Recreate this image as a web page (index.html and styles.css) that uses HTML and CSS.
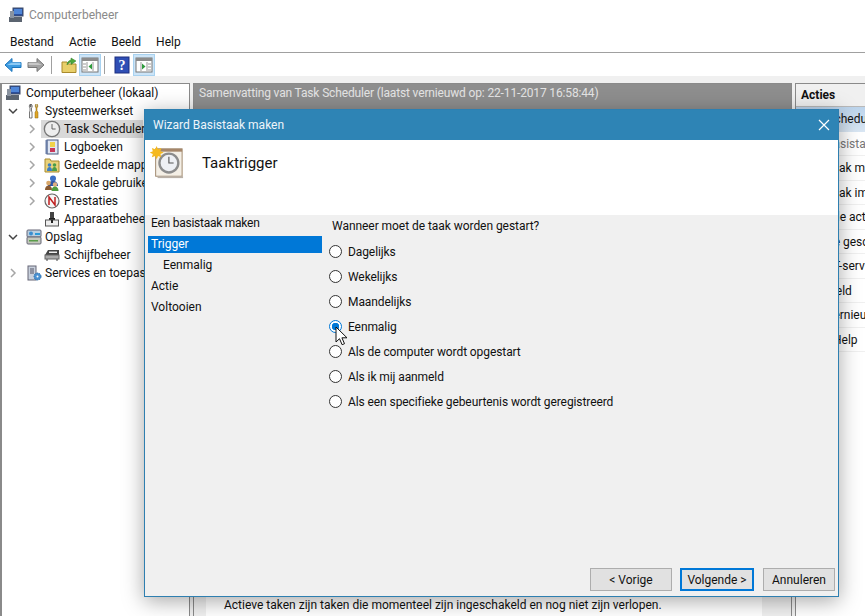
FILE: index.html
```html
<!DOCTYPE html>
<html lang="nl">
<head>
<meta charset="utf-8">
<title>Computerbeheer</title>
<link rel="stylesheet" href="styles.css">
</head>
<body>
<div class="app">
  <header class="titlebar">
    <svg class="ic16" viewBox="0 0 16 16"><rect x="5" y="1" width="10" height="8" fill="#2b4f9e" stroke="#3c4a66"/><rect x="6" y="2" width="8" height="5" fill="#4f86d8"/><rect x="1" y="10" width="13" height="5" fill="#5b6470"/><rect x="2" y="4" width="4" height="7" fill="#8a93a0"/></svg>
    <span>Computerbeheer</span>
  </header>
  <nav class="menubar"><span>Bestand</span><span>Actie</span><span>Beeld</span><span>Help</span></nav>
  <div class="toolbar">
    <svg class="tb t-back" viewBox="0 0 18 18"><path d="M1 9l7-6.500v4h9v5H8v4z" fill="#3d9be0" stroke="#1b75bc"/><path d="M8 6.500h8.500V9H3z" fill="#8ccaf5"/></svg>
    <svg class="tb t-fwd" viewBox="0 0 18 18"><path d="M17 9l-7-6.500v4H1v5h9v4z" fill="#a3a3a3" stroke="#777"/><path d="M10 6.500H1.500V9H15z" fill="#c8c8c8"/></svg>
    <i class="sep"></i>
    <svg class="tb t-up" viewBox="0 0 18 18"><path d="M2 6h5l1 2h8v8.500H2z" fill="#e8cf6a" stroke="#a98a2c"/><path d="M7 9c0-3 2-4.500 4-5V2l5 3-5 3.500V6c-2 .5-3 1.500-4 3z" fill="#4ca83c" stroke="#2f7f28" stroke-width=".5"/></svg>
    <span class="tb-on"><svg class="tb" viewBox="0 0 18 18"><rect x="1" y="2" width="16" height="14" fill="#fff" stroke="#777"/><rect x="1" y="2" width="16" height="3" fill="#8c8c8c"/><path d="M6 6v9M12 6v9M2 8h3M2 11h3M2 14h3" stroke="#999"/><path d="M11 7.500v6l-3.500-3z" fill="#2f9c3d"/></svg></span>
    <i class="sep"></i>
    <svg class="tb t-help" viewBox="0 0 18 18"><rect x="2" y="1" width="14" height="16" fill="#2f4fb5" stroke="#1d2f80"/><text x="9" y="14" class="q">?</text></svg>
    <span class="tb-on t-on2"><svg class="tb" viewBox="0 0 18 18"><rect x="1" y="2" width="16" height="14" fill="#fff" stroke="#777"/><rect x="1" y="2" width="16" height="3" fill="#8c8c8c"/><path d="M6 6v9M12 6v9M13 8h3M13 11h3M13 14h3" stroke="#999"/><path d="M7 7.500v6l3.500-3z" fill="#2f9c3d"/></svg></span>
  </div>

  <main class="panes">
    <aside class="tree">
      <div class="node l0"><svg class="ic16" viewBox="0 0 16 16"><rect x="5" y="1" width="10" height="8" fill="#2b4f9e" stroke="#3c4a66"/><rect x="6" y="2" width="8" height="5" fill="#4f86d8"/><rect x="1" y="10" width="13" height="5" fill="#5b6470"/><rect x="2" y="4" width="4" height="7" fill="#8a93a0"/></svg><span>Computerbeheer (lokaal)</span></div>
      <div class="node l1"><svg class="tw" viewBox="0 0 10 10"><path d="M1 3l4 4 4-4" class="chev-d"/></svg><svg class="ic16" viewBox="0 0 16 16"><path d="M4.500 1C3 2 3 4 4 5v3l-.5 1v6h2.500V9L5.500 8V5c1-1 1-3-.5-4v3h-.5z" fill="#fff" stroke="#555" stroke-width=".8"/><path d="M10 1c-1 1-1 3 0 4v3l-1 1v6h3V9l-1-1V5c1-1 1-3 0-4v3h-1z" fill="#e0a526" stroke="#8a6a14" stroke-width=".5"/></svg><span>Systeemwerkset</span></div>
      <div class="node l2"><svg class="tw" viewBox="0 0 10 10"><path d="M3 1l4 4-4 4" class="chev"/></svg><span class="selbox"><svg class="ic18" viewBox="0 0 20 20"><circle cx="10" cy="10" r="8.500" fill="#eee" stroke="#777" stroke-width="1.500"/><path d="M10 4.500V10h4" fill="none" stroke="#555"/></svg><span>Task Scheduler</span></span></div>
      <div class="node l2"><svg class="tw" viewBox="0 0 10 10"><path d="M3 1l4 4-4 4" class="chev"/></svg><svg class="ic16" viewBox="0 0 16 16"><rect x="3" y="1" width="11" height="14" fill="#dfe6f2" stroke="#4a5a80"/><rect x="1.500" y="1" width="2" height="14" fill="#6a7ea8"/><rect x="6" y="3" width="5" height="5" fill="#f0d24a"/><rect x="6" y="9" width="5" height="4" fill="#c8385a"/></svg><span>Logboeken</span></div>
      <div class="node l2"><svg class="tw" viewBox="0 0 10 10"><path d="M3 1l4 4-4 4" class="chev"/></svg><svg class="ic16" viewBox="0 0 16 16"><path d="M1 2h5l1 2h8v11H1z" fill="#ead27a" stroke="#a98a2c"/><circle cx="5.500" cy="8" r="1.800" fill="#3c7fc4"/><path d="M3 14c0-3 1-4 2.500-4S8 11 8 14z" fill="#3c7fc4"/><circle cx="10.500" cy="8" r="1.800" fill="#4a9c4a"/><path d="M8 14c0-3 1-4 2.500-4s2.500 1 2.500 4z" fill="#4a9c4a"/></svg><span>Gedeelde mappen</span></div>
      <div class="node l2"><svg class="tw" viewBox="0 0 10 10"><path d="M3 1l4 4-4 4" class="chev"/></svg><svg class="ic16" viewBox="0 0 16 16"><circle cx="9" cy="3.500" r="3" fill="#3c6fc4"/><path d="M4 11c0-3 2-5 5-5s5 2 5 5z" fill="#2f55a4"/><circle cx="4.500" cy="8" r="2.300" fill="#d9a86a"/><path d="M1 15c0-3 1.500-4.500 3.500-4.500S8 12 8 15z" fill="#8a5a30"/><circle cx="11" cy="9.500" r="2.200" fill="#e0b080"/><path d="M7.500 16c0-3 1.500-4.500 3.500-4.500s3.500 1.500 3.500 4.500z" fill="#4f9c3f"/></svg><span>Lokale gebruikers</span></div>
      <div class="node l2"><svg class="tw" viewBox="0 0 10 10"><path d="M3 1l4 4-4 4" class="chev"/></svg><svg class="ic16" viewBox="0 0 16 16"><circle cx="8" cy="8" r="7" fill="#f6f6f6" stroke="#666" stroke-width="1.200"/><path d="M5 12V4l6 8V4" fill="none" stroke="#c02020" stroke-width="1.500"/></svg><span>Prestaties</span></div>
      <div class="node l2"><b class="tw"></b><svg class="ic16" viewBox="0 0 16 16"><rect x="6" y="1" width="4" height="6" fill="#444"/><rect x="5" y="7" width="6" height="2" fill="#222"/><rect x="1.500" y="9" width="13" height="6" fill="#eee" stroke="#555"/><rect x="7" y="9" width="2" height="3" fill="#222"/></svg><span>Apparaatbeheer</span></div>
      <div class="node l1"><svg class="tw" viewBox="0 0 10 10"><path d="M1 3l4 4 4-4" class="chev-d"/></svg><svg class="ic16" viewBox="0 0 16 16"><rect x="1" y="1" width="14" height="7" rx="1" fill="#b9cfe0" stroke="#667"/><rect x="1" y="8" width="14" height="7" rx="1" fill="#c4c8bd" stroke="#667"/><circle cx="5" cy="4.500" r="2" fill="#3a8ed0"/><rect x="9" y="4" width="5" height="2" fill="#2a9ad8"/><rect x="3" y="11" width="9" height="1.500" fill="#5a9c4a"/></svg><span>Opslag</span></div>
      <div class="node l2"><b class="tw"></b><svg class="ic16" viewBox="0 0 16 16"><path d="M4 3h11v5H1z" fill="#444"/><rect x="5" y="4.500" width="8" height="1.500" fill="#eee"/><rect x="1" y="8" width="14" height="4" fill="#aaa" stroke="#666"/><path d="M3 12v2M13 12v2" stroke="#444"/></svg><span>Schijfbeheer</span></div>
      <div class="node l1"><svg class="tw" viewBox="0 0 10 10"><path d="M3 1l4 4-4 4" class="chev"/></svg><svg class="ic16" viewBox="0 0 16 16"><rect x="2" y="1" width="8" height="14" fill="#c8d0dc" stroke="#667"/><path d="M4 4h4M4 6h4M4 8h4" stroke="#556"/><circle cx="11.500" cy="11.500" r="3.500" fill="#4a90d0" stroke="#2a70b0" stroke-dasharray="1.500 1"/><circle cx="11.500" cy="11.500" r="1" fill="#fff"/></svg><span>Services en toepassingen</span></div>
    </aside>

    <section class="middle">
      <div class="middle-head">Samenvatting van Task Scheduler (laatst vernieuwd op: 22-11-2017 16:58:44)</div>
      <div class="middle-body">
        <div class="doc">Actieve taken zijn taken die momenteel zijn ingeschakeld en nog niet zijn verlopen.</div>
      </div>
    </section>

    <aside class="actions">
      <div class="act-head">Acties</div>
      <div class="act act-sel">Task Scheduler</div>
      <div class="act sub dim">Basistaak maken...</div>
      <div class="act sub">Taak maken...</div>
      <div class="act sub">Taak importeren...</div>
      <div class="act sub">Alle actieve taken</div>
      <div class="act sub hist">Alle geschiedenis</div>
      <div class="act sub">AT-service</div>
      <div class="act sub view">Beeld</div>
      <div class="act sub">Vernieuwen</div>
      <div class="act sub help">Help</div>
    </aside>
  </main>

  <div class="dialog">
    <div class="dlg-title">
      <span>Wizard Basistaak maken</span>
      <svg class="close" viewBox="0 0 12 12"><path d="M1 1l10 10M11 1L1 11"/></svg>
    </div>
    <div class="dlg-head">
      <svg class="dlg-icon" viewBox="0 0 36 36"><rect x="6" y="3" width="28" height="29" fill="#f4efe6" stroke="#9c8468"/><rect x="6" y="3" width="28" height="3" fill="#a5866a"/><rect x="8" y="32" width="27" height="2" fill="#b9b0a6"/><circle cx="20" cy="18" r="10" fill="#eef0f4" stroke="#8c8c8c" stroke-width="2.500"/><path d="M20 11.500V18h5" fill="none" stroke="#555" stroke-width="1.200"/><path d="M7 0l1.500 3.500L12 2l-1 3.500L14.500 7 11 8.500 12 12 8.500 10.500 7 14l-1.500-3.500L2 12l1-3.500L-.5 7 3 5.500 2 2l3.500 1.500z" fill="#f5b91f"/></svg>
      <h1>Taaktrigger</h1>
    </div>
    <div class="dlg-body">
      <ul class="steps">
        <li class="first">Een basistaak maken</li>
        <li class="on">Trigger</li>
        <li class="ind">Eenmalig</li>
        <li>Actie</li>
        <li>Voltooien</li>
      </ul>
      <div class="content">
        <p>Wanneer moet de taak worden gestart?</p>
        <label class="radio"><i></i>Dagelijks</label>
        <label class="radio"><i></i>Wekelijks</label>
        <label class="radio"><i></i>Maandelijks</label>
        <label class="radio checked"><i></i>Eenmalig
          <svg class="cursor" viewBox="0 0 13 20"><path d="M1 1v15l3.500-3.300 2.600 6 2.400-1-2.600-5.900H12z" fill="#fff" stroke="#111"/></svg>
        </label>
        <label class="radio"><i></i>Als de computer wordt opgestart</label>
        <label class="radio"><i></i>Als ik mij aanmeld</label>
        <label class="radio"><i></i>Als een specifieke gebeurtenis wordt geregistreerd</label>
      </div>
    </div>
    <div class="dlg-foot">
      <button class="btn b-prev">&lt; Vorige</button>
      <button class="btn b-next">Volgende &gt;</button>
      <button class="btn b-cancel">Annuleren</button>
    </div>
  </div>
</div>
</body>
</html>
```
FILE: styles.css
```css
* { box-sizing: border-box; }
html, body { margin: 0; padding: 0; }
body { font: 12px/16px Roboto, "Noto Sans", sans-serif; color: #111; background: #fff; }
.app { position: relative; width: 865px; height: 616px; overflow: hidden; display: flex; flex-direction: column; background: #f0f0f0; }
.ic16 { width: 16px; height: 16px; flex: none; }
.ic18 { width: 18px; height: 18px; flex: none; }

.titlebar { height: 30px; background: #fff; display: flex; align-items: center; gap: 5px; padding-left: 8px; color: #8a8a8a; font-size: 12px; flex: none; }
.menubar { height: 23px; background: #fff; border-bottom: 1px solid #a0a0a0; display: flex; gap: 15px; padding: 1px 0 0 10px; align-items: center; flex: none; }
.toolbar { height: 23px; background: #fff; display: flex; align-items: center; padding-left: 4px; flex: none; }
.tb { width: 18px; height: 18px; display: block; flex: none; }
.t-fwd { margin-left: 5px; }
.t-up { margin-left: 8px; }
.t-help { margin-left: 8px; }
.tb-on { background: #cce4f7; border: 1px solid #a8d2f0; padding: 1px; margin-left: 1px; }
.t-on2 { margin-left: 2px; }
.sep { width: 1px; height: 18px; background: #a0a0a0; margin-left: 6px; }
.tb-on + .sep { margin-left: 3px; }
.q { font: bold 14px "Liberation Serif", serif; fill: #fff; text-anchor: middle; }

.panes { flex: 1; display: flex; padding-top: 7px; min-height: 0; gap: 3px; }
.tree { width: 190px; background: #fff; border: 1px solid #8a8a8a; border-width: 1px 1px 0 1px; flex: none; overflow: hidden; white-space: nowrap; border-left-width: 2px; }
.node { height: 18px; display: flex; align-items: center; gap: 3px; }
.l0 { padding-left: 3px; gap: 5px; }
.l1 { padding-left: 6px; }
.l1 .tw { margin-right: 5px; }
.l2 { padding-left: 25px; }
.l2 > span { margin-left: 1px; }
.tw { width: 10px; height: 10px; flex: none; margin-right: 4px; }
.chev { fill: none; stroke: #a6a6a6; stroke-width: 1.500; }
.chev-d { fill: none; stroke: #444; stroke-width: 1.500; }
.l2 > .selbox { display: flex; align-items: center; gap: 3px; background: #d9d9d9; width: 102px; height: 18px; margin-left: -3px; padding-left: 2px; }

.middle { flex: 1; display: flex; flex-direction: column; border: 1px solid #8a8a8a; border-bottom: 0; min-width: 0; background: #f0f0f0; }
.middle-head { height: 26px; background: #8e8e8e; color: #e4e4e4; padding: 1px 0 0 5px; flex: none; letter-spacing: -.15px; }
.middle-body { flex: 1; display: flex; flex-direction: column; justify-content: flex-end; padding: 0 29px 0 12px; }
.doc { background: #fff; height: 20px; padding: 1px 0 0 18px; white-space: nowrap; }

.actions { width: 70px; flex: none; background: #fff; border: 1px solid #8a8a8a; border-width: 1px 0 0 1px; overflow: hidden; white-space: nowrap; }
.act-head { height: 23px; background: #f0f0f0; font-weight: 700; padding: 3px 0 0 5px; border-bottom: 1px solid #b9b9b9; }
.act { height: 24.500px; padding: 4px 0 0 3px; }
.act-sel { background: linear-gradient(#bcd4ec, #d9e6f3); }
.sub { padding-left: 30px; border-bottom: 1px solid #f0f0f0; }
.dim { color: #777; }
.hist { padding-left: 24px; }
.view { padding-left: 26px; }
.help { padding-left: 37px; }

.dialog { position: absolute; left: 144px; top: 109px; width: 695px; height: 488px; display: flex; flex-direction: column; background: #f0f0f0; border: 1px solid #2e7fb0; box-shadow: 0 4px 20px rgba(0,0,0,.35); }
.dlg-title { height: 30px; background: #2e84b5; color: #eef5fa; padding-left: 8px; display: flex; align-items: center; justify-content: space-between; flex: none; }
.close { width: 12px; height: 12px; margin-right: 8px; }
.close path { stroke: #fff; stroke-width: 1.200; fill: none; }
.dlg-head { height: 75px; background: #fff; display: flex; padding: 6px 0 0 5px; flex: none; }
.dlg-icon { width: 34px; height: 34px; }
h1 { font: 400 15px/20px Roboto, sans-serif; margin: 7px 0 0 18px; }
.dlg-body { flex: 1; display: flex; min-height: 0; }
.steps { width: 177px; margin: 0; padding: 0 0 0 3px; list-style: none; flex: none; }
.steps li { height: 21px; line-height: 16px; padding: 0 0 0 3px; }
.steps .first { letter-spacing: -.25px; }
.steps .on { height: 17px; margin: 0 0 4px; background: #0078d7; color: #fff; }
.steps .ind { padding-left: 15px; }
.content { flex: 1; padding-left: 7px; }
.content p { margin: 3px 0 5px 3px; letter-spacing: -.05px; }
.radio { height: 25px; display: flex; align-items: center; gap: 6px; position: relative; line-height: 14px; letter-spacing: -.09px; }
.radio i { width: 13px; height: 13px; border: 1px solid #333; border-radius: 50%; background: #fff; flex: none; }
.checked i { border-color: #0078d7; background: radial-gradient(circle, #0078d7 0 3.500px, #fff 4px); }
.cursor { position: absolute; left: 6px; top: 12px; width: 13px; height: 20px; }
.dlg-foot { height: 23px; flex: none; display: flex; justify-content: flex-end; padding-right: 3px; margin-bottom: 5px; }
.btn { height: 23px; font: inherit; color: #111; background: #e1e1e1; border: 1px solid #adadad; padding: 0; }
.b-prev { width: 82px; margin-right: 8px; }
.b-next { width: 74px; margin-right: 9px; border: 2px solid #0078d7; }
.b-cancel { width: 72px; }
```
